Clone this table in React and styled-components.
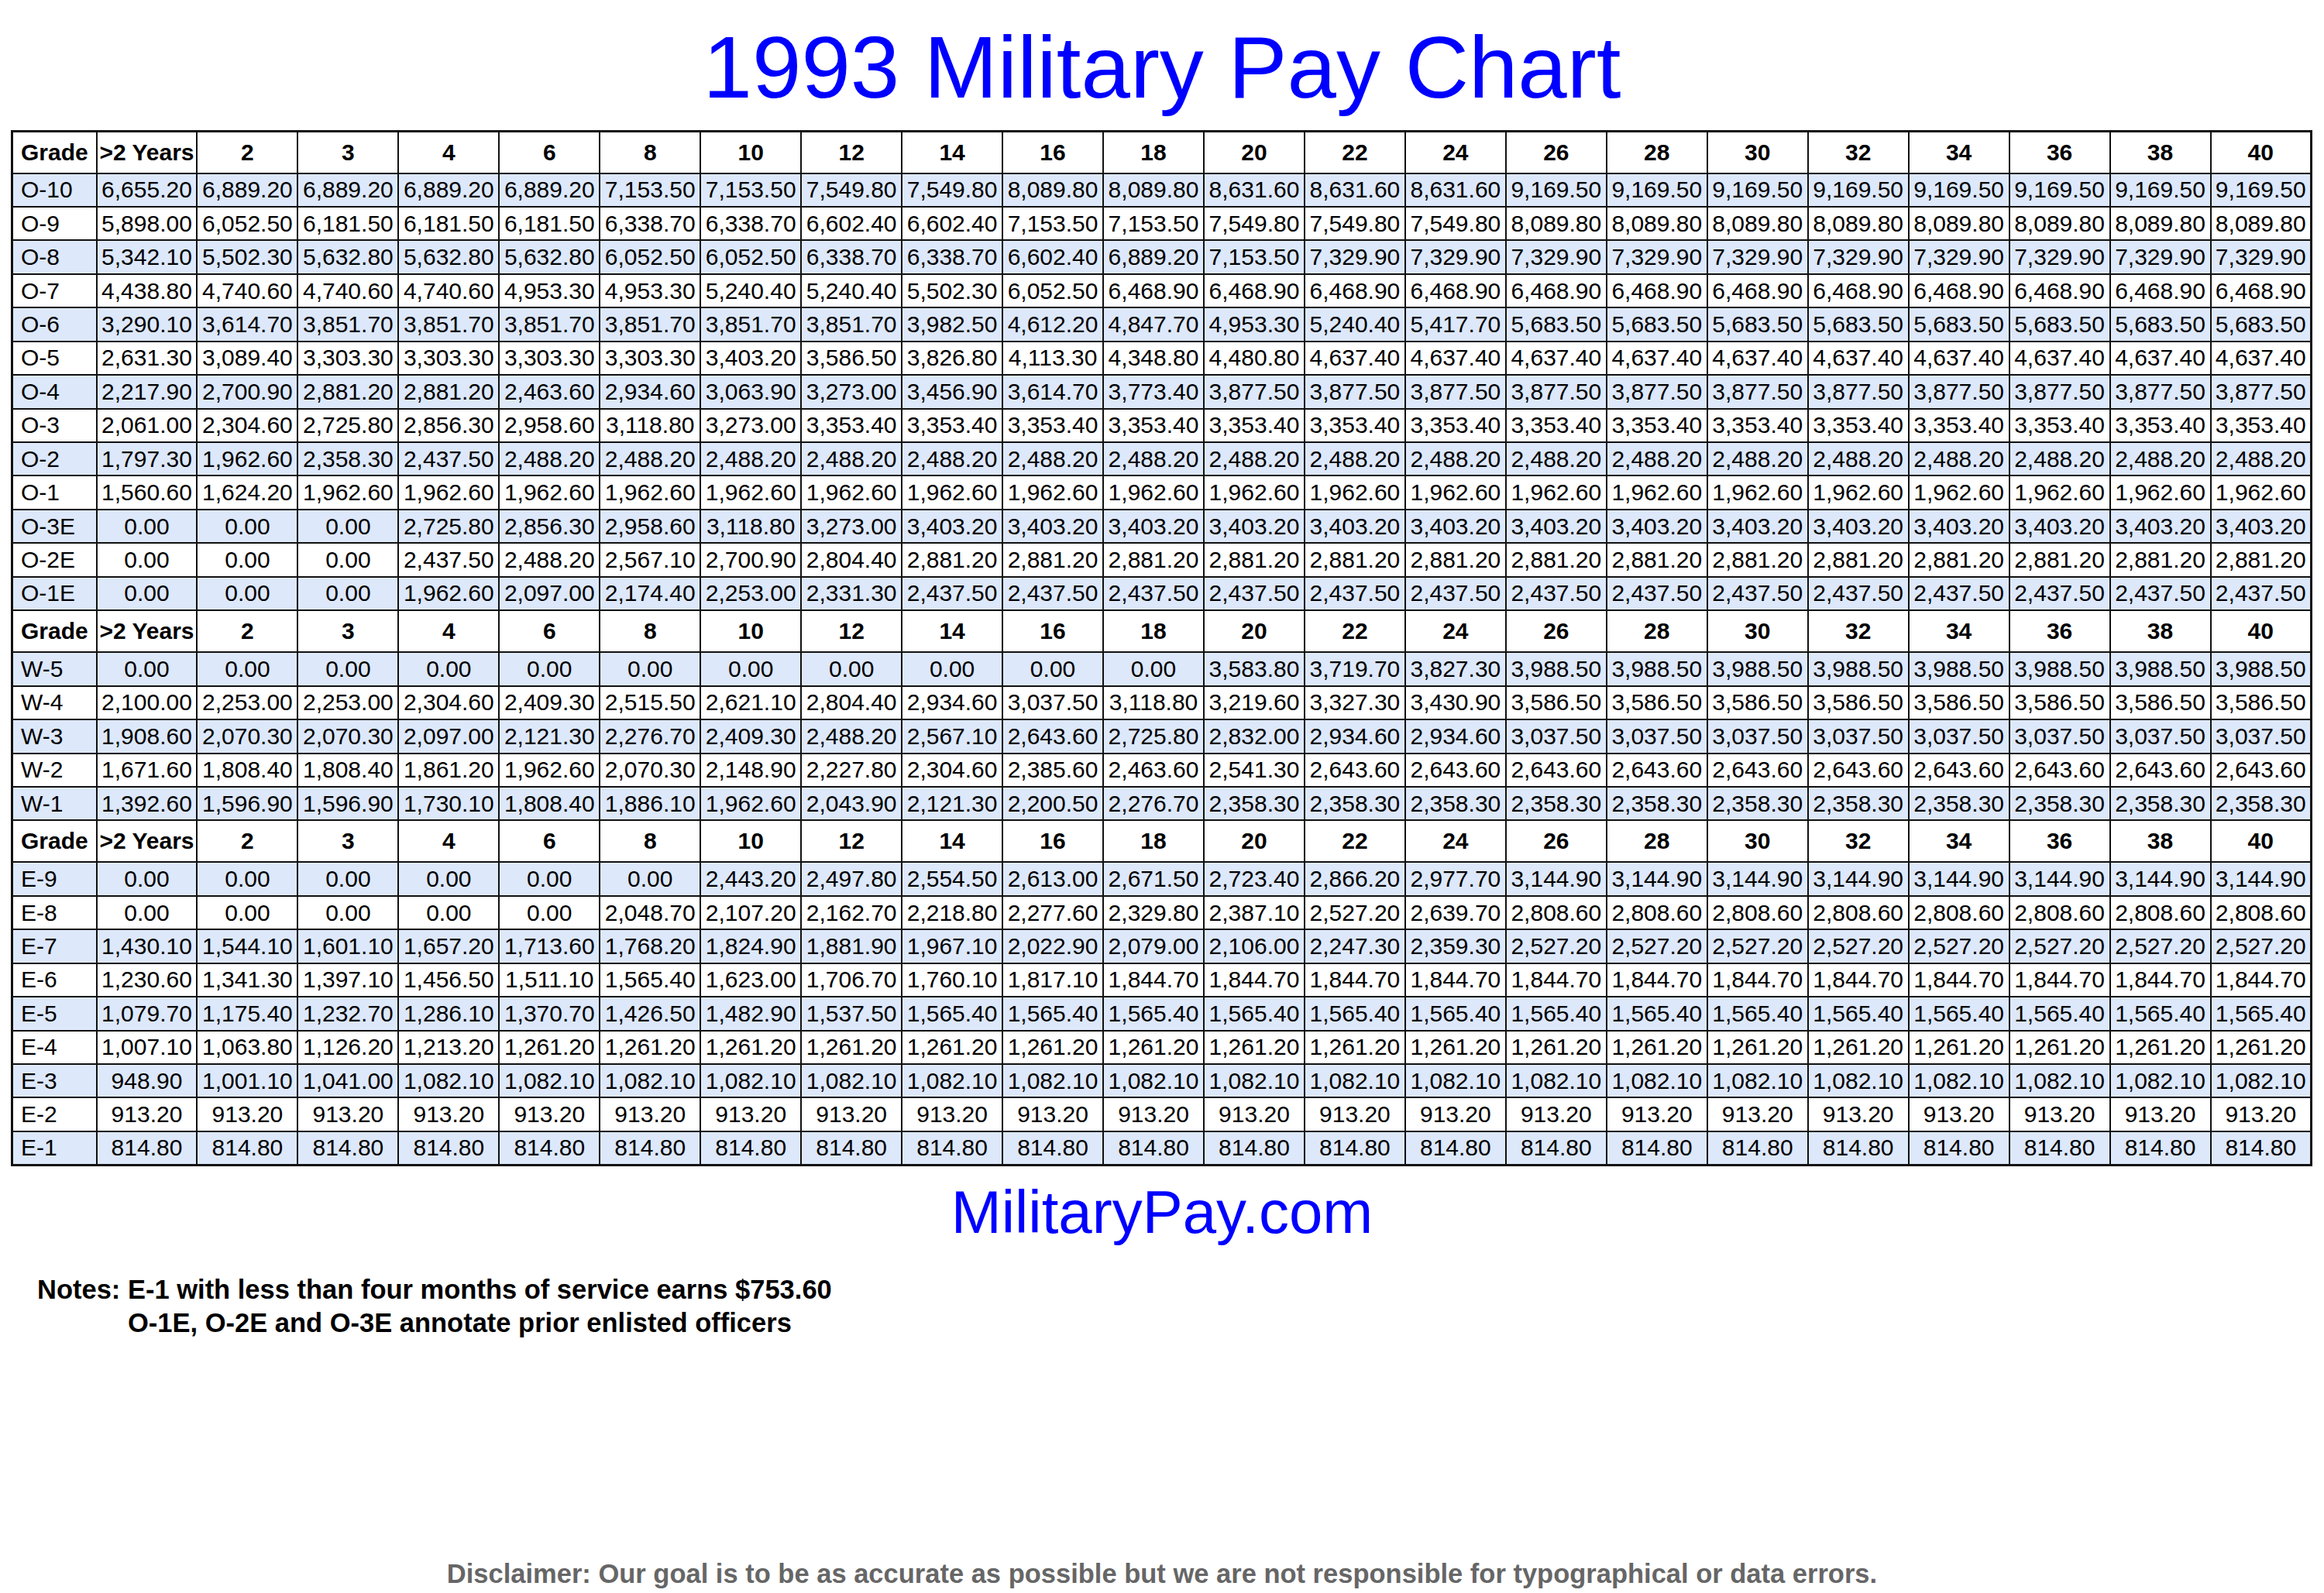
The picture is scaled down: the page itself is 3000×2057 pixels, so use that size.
import React from 'react';
import styled, { createGlobalStyle } from 'styled-components';

const GlobalStyle = createGlobalStyle`
  html, body {
    margin: 0;
    padding: 0;
    background: #ffffff;
  }
  body {
    font-family: "Liberation Sans", Arial, sans-serif;
    color: #000;
  }
`;

const YEARS = ['>2 Years', '2', '3', '4', '6', '8', '10', '12', '14', '16', '18', '20', '22', '24', '26', '28', '30', '32', '34', '36', '38', '40'];

// first values as listed, then the last one repeated out to 22 columns
const fill = (values, rest) => {
  const out = [...values];
  while (out.length < YEARS.length) out.push(rest);
  return out;
};

const zeros = (n) => Array(n).fill('0.00');

const sections = [
  [
    ['O-10', fill(['6,655.20', '6,889.20', '6,889.20', '6,889.20', '6,889.20', '7,153.50', '7,153.50', '7,549.80', '7,549.80', '8,089.80', '8,089.80', '8,631.60', '8,631.60', '8,631.60'], '9,169.50')],
    ['O-9', fill(['5,898.00', '6,052.50', '6,181.50', '6,181.50', '6,181.50', '6,338.70', '6,338.70', '6,602.40', '6,602.40', '7,153.50', '7,153.50', '7,549.80', '7,549.80', '7,549.80'], '8,089.80')],
    ['O-8', fill(['5,342.10', '5,502.30', '5,632.80', '5,632.80', '5,632.80', '6,052.50', '6,052.50', '6,338.70', '6,338.70', '6,602.40', '6,889.20', '7,153.50', '7,329.90', '7,329.90'], '7,329.90')],
    ['O-7', fill(['4,438.80', '4,740.60', '4,740.60', '4,740.60', '4,953.30', '4,953.30', '5,240.40', '5,240.40', '5,502.30', '6,052.50'], '6,468.90')],
    ['O-6', fill(['3,290.10', '3,614.70', '3,851.70', '3,851.70', '3,851.70', '3,851.70', '3,851.70', '3,851.70', '3,982.50', '4,612.20', '4,847.70', '4,953.30', '5,240.40', '5,417.70'], '5,683.50')],
    ['O-5', fill(['2,631.30', '3,089.40', '3,303.30', '3,303.30', '3,303.30', '3,303.30', '3,403.20', '3,586.50', '3,826.80', '4,113.30', '4,348.80', '4,480.80'], '4,637.40')],
    ['O-4', fill(['2,217.90', '2,700.90', '2,881.20', '2,881.20', '2,463.60', '2,934.60', '3,063.90', '3,273.00', '3,456.90', '3,614.70', '3,773.40'], '3,877.50')],
    ['O-3', fill(['2,061.00', '2,304.60', '2,725.80', '2,856.30', '2,958.60', '3,118.80', '3,273.00'], '3,353.40')],
    ['O-2', fill(['1,797.30', '1,962.60', '2,358.30', '2,437.50'], '2,488.20')],
    ['O-1', fill(['1,560.60', '1,624.20'], '1,962.60')],
    ['O-3E', fill([...zeros(3), '2,725.80', '2,856.30', '2,958.60', '3,118.80', '3,273.00'], '3,403.20')],
    ['O-2E', fill([...zeros(3), '2,437.50', '2,488.20', '2,567.10', '2,700.90', '2,804.40'], '2,881.20')],
    ['O-1E', fill([...zeros(3), '1,962.60', '2,097.00', '2,174.40', '2,253.00', '2,331.30'], '2,437.50')],
  ],
  [
    ['W-5', fill([...zeros(11), '3,583.80', '3,719.70', '3,827.30'], '3,988.50')],
    ['W-4', fill(['2,100.00', '2,253.00', '2,253.00', '2,304.60', '2,409.30', '2,515.50', '2,621.10', '2,804.40', '2,934.60', '3,037.50', '3,118.80', '3,219.60', '3,327.30', '3,430.90'], '3,586.50')],
    ['W-3', fill(['1,908.60', '2,070.30', '2,070.30', '2,097.00', '2,121.30', '2,276.70', '2,409.30', '2,488.20', '2,567.10', '2,643.60', '2,725.80', '2,832.00', '2,934.60', '2,934.60'], '3,037.50')],
    ['W-2', fill(['1,671.60', '1,808.40', '1,808.40', '1,861.20', '1,962.60', '2,070.30', '2,148.90', '2,227.80', '2,304.60', '2,385.60', '2,463.60', '2,541.30'], '2,643.60')],
    ['W-1', fill(['1,392.60', '1,596.90', '1,596.90', '1,730.10', '1,808.40', '1,886.10', '1,962.60', '2,043.90', '2,121.30', '2,200.50', '2,276.70'], '2,358.30')],
  ],
  [
    ['E-9', fill([...zeros(6), '2,443.20', '2,497.80', '2,554.50', '2,613.00', '2,671.50', '2,723.40', '2,866.20', '2,977.70'], '3,144.90')],
    ['E-8', fill([...zeros(5), '2,048.70', '2,107.20', '2,162.70', '2,218.80', '2,277.60', '2,329.80', '2,387.10', '2,527.20', '2,639.70'], '2,808.60')],
    ['E-7', fill(['1,430.10', '1,544.10', '1,601.10', '1,657.20', '1,713.60', '1,768.20', '1,824.90', '1,881.90', '1,967.10', '2,022.90', '2,079.00', '2,106.00', '2,247.30', '2,359.30'], '2,527.20')],
    ['E-6', fill(['1,230.60', '1,341.30', '1,397.10', '1,456.50', '1,511.10', '1,565.40', '1,623.00', '1,706.70', '1,760.10', '1,817.10'], '1,844.70')],
    ['E-5', fill(['1,079.70', '1,175.40', '1,232.70', '1,286.10', '1,370.70', '1,426.50', '1,482.90', '1,537.50'], '1,565.40')],
    ['E-4', fill(['1,007.10', '1,063.80', '1,126.20', '1,213.20'], '1,261.20')],
    ['E-3', fill(['948.90', '1,001.10', '1,041.00'], '1,082.10')],
    ['E-2', fill([], '913.20')],
    ['E-1', fill([], '814.80')],
  ],
];

const Page = styled.div`
  width: 3000px;
  padding: 30px 0 6px;
  box-sizing: border-box;
`;

const Title = styled.h1`
  margin: 0;
  font-family: "Liberation Sans", Arial, sans-serif;
  font-weight: 400;
  font-size: 114px;
  line-height: 114px;
  color: #0000ff;
  text-align: center;
`;

const Chart = styled.table`
  margin: 24px 0 0 14px;
  width: 2971px;
  table-layout: fixed;
  border-collapse: collapse;
  border: 3px solid #111;
  font-family: "Liberation Sans", Arial, sans-serif;
  font-size: 30px;
`;

const Row = styled.tr`
  height: ${p => (p.$head ? '54px' : '43.45px')};
  background: ${p => (p.$shade ? '#dde8fb' : '#ffffff')};
`;

const Cell = styled.td`
  border: 2px solid #111;
  padding: 0;
  text-align: center;
  white-space: nowrap;
  overflow: hidden;
  font-weight: ${p => (p.$bold ? 700 : 400)};
`;

const GradeCell = styled(Cell)`
  text-align: left;
  padding-left: 10px;
`;

const Site = styled.div`
  margin-top: 20px;
  font-size: 78px;
  line-height: 78px;
  color: #0000ff;
  text-align: center;
`;

const Notes = styled.div`
  display: flex;
  margin: 40px 0 0 48px;
  font-size: 34.5px;
  line-height: 43px;
  font-weight: 700;
`;

const NotesLabel = styled.span`
  white-space: pre;
`;

const NotesLines = styled.div`
  display: flex;
  flex-direction: column;
`;

const Disclaimer = styled.div`
  margin-top: 281px;
  font-size: 34.5px;
  line-height: 43px;
  font-weight: 700;
  color: #666666;
  text-align: center;
`;

const HeaderRow = () => (
  <Row $head>
    <GradeCell $bold>Grade</GradeCell>
    {YEARS.map(y => (
      <Cell key={y} $bold>{y}</Cell>
    ))}
  </Row>
);

export default function App() {
  return (
    <Page>
      <GlobalStyle />
      <Title>1993 Military Pay Chart</Title>

      <Chart>
        <colgroup>
          <col style={{ width: 109 }} />
          {YEARS.map(y => <col key={y} />)}
        </colgroup>
        <tbody>
          {sections.map((rows, s) => (
            <React.Fragment key={s}>
              <HeaderRow />
              {rows.map(([grade, pay], i) => (
                <Row key={grade} $shade={i % 2 === 0}>
                  <GradeCell>{grade}</GradeCell>
                  {pay.map((v, j) => (
                    <Cell key={j}>{v}</Cell>
                  ))}
                </Row>
              ))}
            </React.Fragment>
          ))}
        </tbody>
      </Chart>

      <Site>MilitaryPay.com</Site>

      <Notes>
        <NotesLabel>Notes: </NotesLabel>
        <NotesLines>
          <span>E-1 with less than four months of service earns $753.60</span>
          <span>O-1E, O-2E and O-3E annotate prior enlisted officers</span>
        </NotesLines>
      </Notes>

      <Disclaimer>
        Disclaimer: Our goal is to be as accurate as possible but we are not responsible for typographical or data errors.
      </Disclaimer>
    </Page>
  );
}
